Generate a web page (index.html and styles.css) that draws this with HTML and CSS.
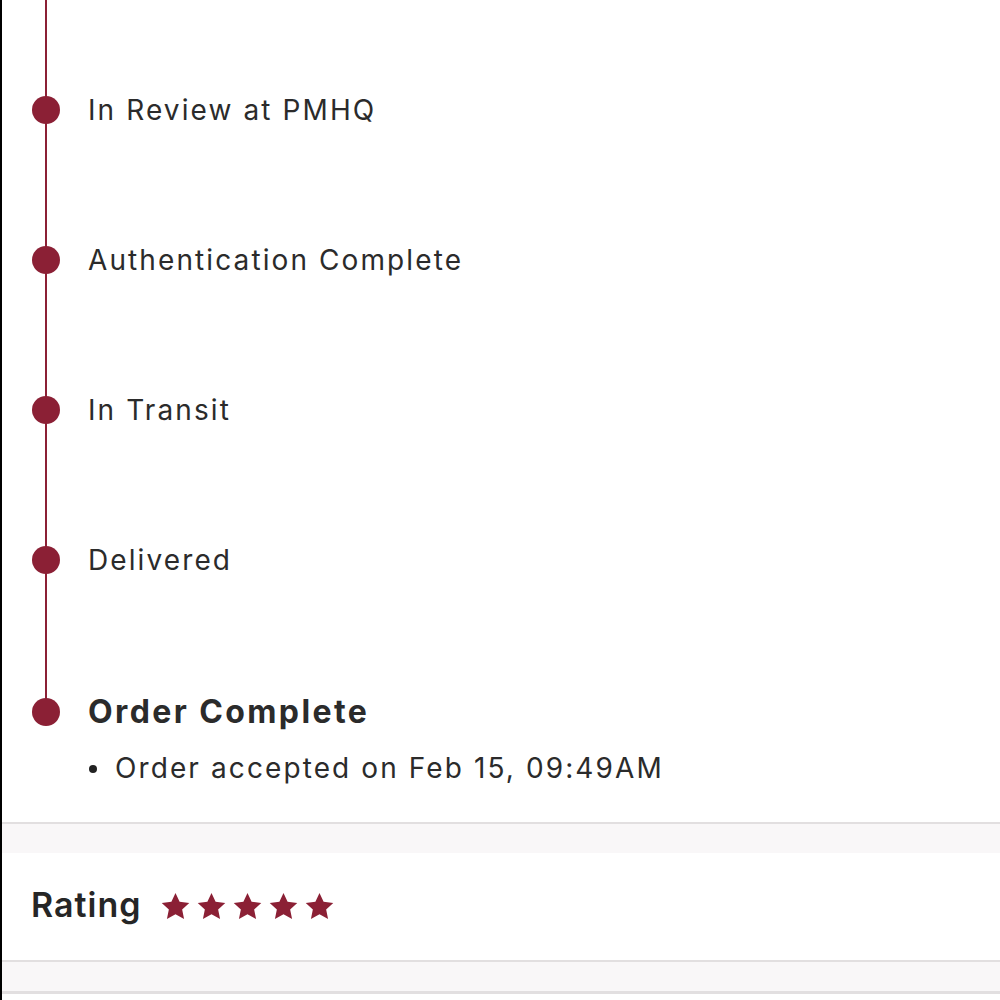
FILE: index.html
```html
<!DOCTYPE html>
<html>
<head>
<meta charset="utf-8">
<link rel="stylesheet" href="styles.css">
</head>
<body>
<div class="page">
  <ol class="timeline">
    <li class="step"><div class="step-title">In Review at PMHQ</div></li>
    <li class="step"><div class="step-title">Authentication Complete</div></li>
    <li class="step"><div class="step-title">In Transit</div></li>
    <li class="step"><div class="step-title">Delivered</div></li>
    <li class="step step-current">
      <div class="step-title">Order Complete</div>
      <ul class="step-notes">
        <li>Order accepted on Feb 15, 09:49AM</li>
      </ul>
    </li>
  </ol>
  <div class="band"></div>
  <section class="rating">
    <span class="rating-label">Rating</span>
    <span class="stars">
      <svg class="star" viewBox="0 0 24 24"><path d="M12 .8l3.4 7.3 8 .9-5.9 5.5 1.6 7.9L12 18.4l-7.1 4 1.6-7.9L.6 9l8-.9z"/></svg>
      <svg class="star" viewBox="0 0 24 24"><path d="M12 .8l3.4 7.3 8 .9-5.9 5.5 1.6 7.9L12 18.4l-7.1 4 1.6-7.9L.6 9l8-.9z"/></svg>
      <svg class="star" viewBox="0 0 24 24"><path d="M12 .8l3.4 7.3 8 .9-5.9 5.5 1.6 7.9L12 18.4l-7.1 4 1.6-7.9L.6 9l8-.9z"/></svg>
      <svg class="star" viewBox="0 0 24 24"><path d="M12 .8l3.4 7.3 8 .9-5.9 5.5 1.6 7.9L12 18.4l-7.1 4 1.6-7.9L.6 9l8-.9z"/></svg>
      <svg class="star" viewBox="0 0 24 24"><path d="M12 .8l3.4 7.3 8 .9-5.9 5.5 1.6 7.9L12 18.4l-7.1 4 1.6-7.9L.6 9l8-.9z"/></svg>
    </span>
  </section>
  <div class="band"></div>
  <div class="card-top"></div>
</div>
</body>
</html>
```
FILE: styles.css
```css
html, body {
  margin: 0;
  padding: 0;
  background: #ffffff;
}
body {
  font-family: "Inter", "Liberation Sans", sans-serif;
  color: #2b2b2b;
}
.page {
  border-left: 2px solid #000;
  min-height: 1000px;
  overflow: hidden;
}
.timeline {
  list-style: none;
  margin: 0;
  padding: 90px 0 38px 0;
}
.step {
  position: relative;
  padding-left: 86px;
  margin-bottom: 110px;
}
.step:last-child {
  margin-bottom: 0;
}
.step::before {
  content: "";
  position: absolute;
  left: 43px;
  top: -140px;
  height: 160px;
  width: 2px;
  background: #8b2035;
}
.step::after {
  content: "";
  position: absolute;
  left: 30px;
  top: 6px;
  width: 28px;
  height: 28px;
  border-radius: 50%;
  background: #8b2035;
}
.step-title {
  height: 40px;
  line-height: 40px;
  font-size: 28px;
  letter-spacing: 2.1px;
}
.step-current {
  padding-top: 2px;
}
.step-current .step-title {
  font-weight: 700;
  font-size: 32px;
  letter-spacing: 2.4px;
}
.step-current::after {
  top: 8px;
}
.step-current::before {
  height: 162px;
}
.step-notes {
  list-style: none;
  margin: 20px 0 0 0;
  padding: 0;
}
.step-notes li {
  position: relative;
  padding-left: 27px;
  font-size: 28px;
  line-height: 32px;
  letter-spacing: 2.1px;
}
.step-notes li::before {
  content: "";
  position: absolute;
  left: 1px;
  top: 13px;
  width: 8px;
  height: 8px;
  border-radius: 50%;
  background: #222;
}
.band {
  height: 29px;
  background: #f9f7f8;
  border-top: 2px solid #e2dfe0;
}
.card-top {
  border-top: 3px solid #e2dfe0;
}
.rating {
  display: flex;
  align-items: center;
  gap: 19px;
  height: 107px;
  padding-left: 29px;
}
.rating-label {
  font-size: 34px;
  font-weight: 600;
  letter-spacing: 1px;
  color: #262626;
  padding-bottom: 4px;
}
.stars {
  display: flex;
  gap: 7px;
}
.star {
  width: 29px;
  height: 29px;
  fill: #8b2035;
}
```
